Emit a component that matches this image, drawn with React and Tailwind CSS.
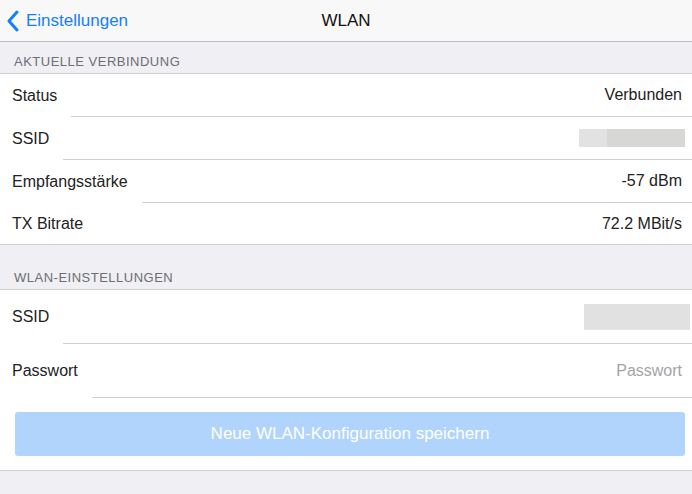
export default function App() {
  const font = { fontFamily: '"Liberation Sans", Arial, sans-serif' };
  const Row = ({ label, children, h = "h-[43px]", last = false, gap = "ml-[14px]" }) => (
    <div className={`flex items-stretch ${h}`}>
      <div className="pl-[12px] flex items-center text-[16px] text-[#222] whitespace-nowrap">{label}</div>
      <div className={`flex-1 flex items-center justify-end pr-[10px] ${gap} ${last ? "" : "border-b border-[#cfcfcf]"}`}>
        {children}
      </div>
    </div>
  );
  return (
    <div className="w-[692px] h-[494px] bg-[#efeff4] overflow-hidden" style={font}>
      {/* Navbar */}
      <div className="h-[42px] bg-[#f8f8f8] border-b border-[#bdbdbd] relative flex items-center">
        <div className="flex items-center pl-[6px] text-[#157efb] text-[17px]">
          <svg width="14" height="22" viewBox="0 0 14 22" className="mr-[6px]">
            <polyline points="11,2 3,11 11,20" fill="none" stroke="#157efb" strokeWidth="3" strokeLinecap="round" strokeLinejoin="round" />
          </svg>
          <span>Einstellungen</span>
        </div>
        <div className="absolute left-0 right-0 top-0 h-[41px] flex items-center justify-center text-[17px] text-[#111] pointer-events-none">
          WLAN
        </div>
      </div>

      {/* Section 1 header */}
      <div className="h-[31px] flex items-end pl-[14px] pb-[4px] text-[13px] leading-[15px] tracking-[0.5px] text-[#6d6d72]">
        AKTUELLE VERBINDUNG
      </div>
      <div className="bg-white border-t border-b border-[#d0d0d0]">
        <Row label="Status"><span className="text-[16px] text-[#222]">Verbunden</span></Row>
        <Row label="SSID">
          <div className="flex h-[18px] w-[106px] mr-[-3px]">
            <div className="w-[28px] bg-[#e2e2e2]" />
            <div className="flex-1 bg-[#d7d7d5]" />
          </div>
        </Row>
        <Row label="Empfangsstärke"><span className="text-[16px] text-[#222]">-57 dBm</span></Row>
        <Row label="TX Bitrate" h="h-[41px]" last><span className="text-[16px] text-[#222]">72.2 MBit/s</span></Row>
      </div>

      {/* Section 2 header */}
      <div className="h-[44px] flex items-end pl-[14px] pb-[4px] text-[13px] leading-[15px] tracking-[0.5px] text-[#6d6d72]">
        WLAN-EINSTELLUNGEN
      </div>
      <div className="bg-white border-t border-b border-[#d0d0d0]">
        <Row label="SSID" h="h-[54px]">
          <div className="h-[26px] w-[106px] mr-[-8px] bg-[#e1e1e1]" />
        </Row>
        <Row label="Passwort" h="h-[54px]" gap="ml-[14px]">
          <span className="text-[16px] text-[#a4a4a4]">Passwort</span>
        </Row>
        <div className="pl-[15px] pr-[7px] pt-[14px] pb-[14px]">
          <div className="h-[44px] rounded-[3px] bg-[#b1d4fd] flex items-center justify-center text-white text-[17px]">
            Neue WLAN-Konfiguration speichern
          </div>
        </div>
      </div>
    </div>
  );
}
